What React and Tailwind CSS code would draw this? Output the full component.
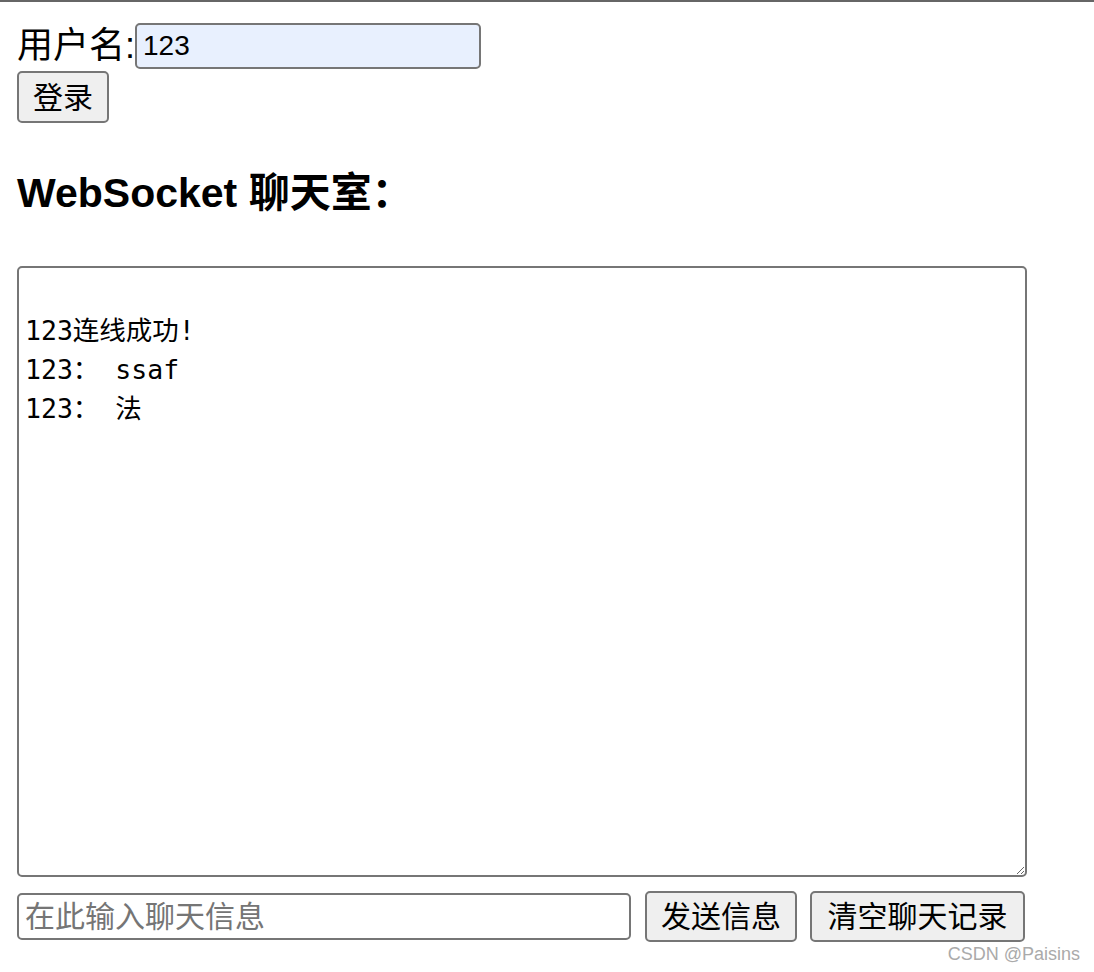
import { useState } from "react";

const log = "\n123连线成功!\n123： ssaf\n123： 法";

export default function App() {
  const [name, setName] = useState("123");
  const [msg, setMsg] = useState("");
  const [text, setText] = useState(log);

  return (
    <div className="min-h-screen bg-white border-t-2 border-[#666] text-black font-['Liberation_Sans','Noto_Sans_CJK_SC',sans-serif]">
      <div className="px-[17px] pt-[21px]">
        <div className="flex items-center h-[46px]">
          <span className="text-[36px] leading-none">用户名:</span>
          <input
            className="w-[346px] h-[46px] px-[6px] text-[28px] bg-[#e8f0fe] border-2 border-[#767676] rounded-[5px] outline-none"
            value={name}
            onChange={(e) => setName(e.target.value)}
          />
        </div>
        <button className="block mt-[2px] w-[92px] h-[52px] text-[30px] bg-[#efefef] border-2 border-[#767676] rounded-[5px]">
          登录
        </button>
        <h2 className="mt-[50px] text-[41px] leading-none font-bold">WebSocket 聊天室：</h2>
        <textarea
          className="block mt-[52px] w-[1010px] h-[611px] pt-[4px] px-[6px] text-[26.5px] leading-[39px] border-2 border-[#767676] rounded-[5px] outline-none font-['DejaVu_Sans_Mono','Noto_Sans_CJK_SC',monospace]"
          value={text}
          onChange={(e) => setText(e.target.value)}
        />
        <div className="flex items-center mt-[14px] h-[51px]">
          <input
            className="w-[614px] h-[47px] px-[6px] text-[30px] border-2 border-[#767676] rounded-[5px] outline-none placeholder:text-[#757575]"
            placeholder="在此输入聊天信息"
            value={msg}
            onChange={(e) => setMsg(e.target.value)}
          />
          <button
            className="ml-[14px] w-[152px] h-[51px] text-[30px] bg-[#efefef] border-2 border-[#767676] rounded-[5px]"
            onClick={() => setMsg("")}
          >
            发送信息
          </button>
          <button
            className="ml-[13px] w-[215px] h-[51px] text-[30px] bg-[#efefef] border-2 border-[#767676] rounded-[5px]"
            onClick={() => setText("")}
          >
            清空聊天记录
          </button>
        </div>
      </div>
      <div className="mt-[3px] pr-[14px] text-right text-[18px] leading-none text-[#aaa]">CSDN @Paisins</div>
    </div>
  );
}
